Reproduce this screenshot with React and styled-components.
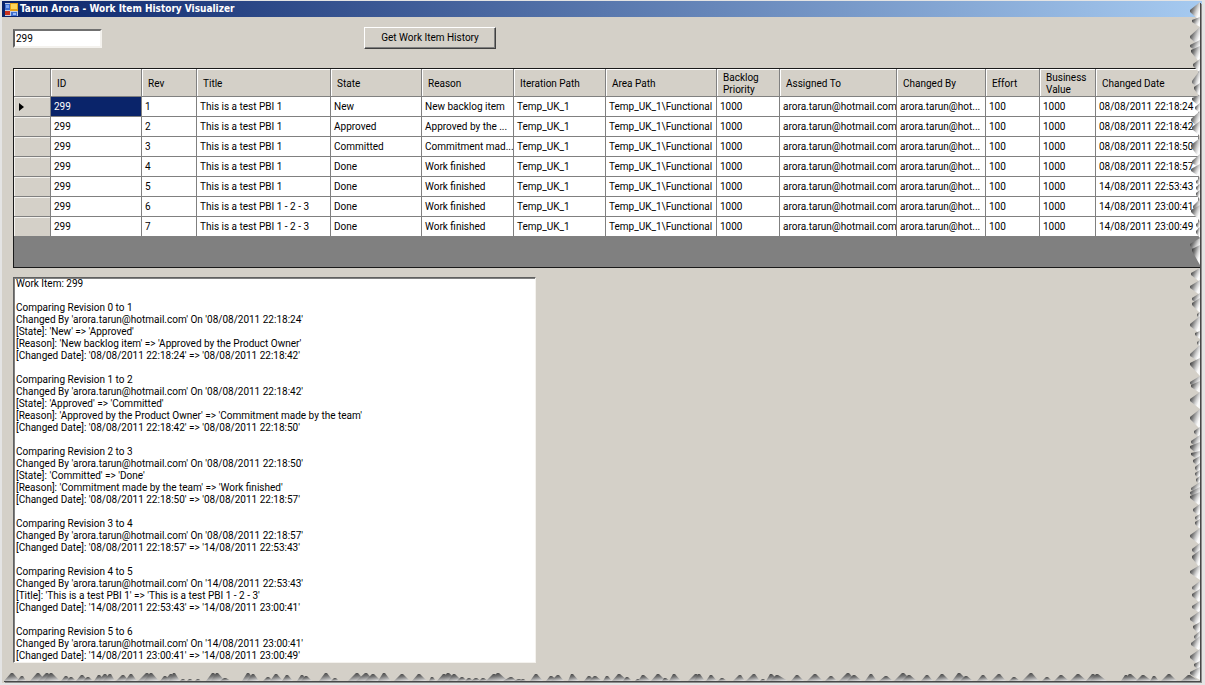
import React, { useState } from 'react';
import styled, { createGlobalStyle } from 'styled-components';

const GlobalStyle = createGlobalStyle`
    * {
        box-sizing: border-box;
    }
    body {
        margin: 0;
        background-color: #e4e4e4;
        font-family: Roboto, "Liberation Sans", sans-serif;
        font-size: 10px;
        line-height: 12px;
        color: #000;
    }
    input, button, textarea {
        font: inherit;
        color: inherit;
    }
`;

const Page = styled.div`
    display: flex;
    min-height: 100vh;
    padding: 1px 3px 2px 2px;
`;

const Window = styled.main`
    position: relative;
    display: flex;
    flex-direction: column;
    flex: 1;
    min-width: 0;
    background-color: #d4d0c8;
    overflow: hidden;
`;

const TitleBar = styled.header`
    display: flex;
    align-items: center;
    gap: 2px;
    height: 16px;
    padding-left: 3px;
    background: linear-gradient(to right, #0a246a, #a6caf0);
`;

const Title = styled.h1`
    margin: 0;
    font-family: "DejaVu Sans Condensed", "DejaVu Sans", sans-serif;
    font-size: 10px;
    line-height: 16px;
    font-weight: bold;
    color: #fff;
`;

const Content = styled.div`
    display: flex;
    flex-direction: column;
    flex: 1;
    padding: 10px 0 20px 11px;
`;

const SearchForm = styled.form`
    display: flex;
    align-items: center;
    gap: 262px;
    margin-bottom: 19px;
`;

const IdInput = styled.input`
    width: 89px;
    height: 19px;
    padding: 0 1px;
    background-color: #fff;
    border: 2px solid;
    border-color: #707070 #f4f2ee #f4f2ee #606060;
    outline: none;
`;

const SearchButton = styled.button`
    width: 132px;
    height: 22px;
    padding: 0;
    background-color: #d4d0c8;
    border: 1px solid;
    border-color: #fff #404040 #404040 #fff;
    box-shadow: inset -1px -1px 0 #808080;
`;

const GridPanel = styled.div`
    min-height: 200px;
    margin-bottom: 9px;
    background-color: #808080;
    border: 1px solid #1a1a1a;
    border-right: 0;
    overflow: hidden;
`;

const Grid = styled.table`
    width: 100%;
    table-layout: fixed;
    border-collapse: separate;
    border-spacing: 0;
    border-right: 3px solid #d4d0c8;
`;

const Col = styled.col`
    width: ${props => props.$width ? `${props.$width}px` : 'auto'};
`;

const HeadCell = styled.th`
    height: 28px;
    padding: 2px 0 0 6px;
    background-color: #d4d0c8;
    border-right: 1px solid #808080;
    border-bottom: 1px solid #808080;
    box-shadow: inset 1px 1px 0 #fff;
    font-weight: normal;
    text-align: left;
    vertical-align: middle;
`;

const RowHead = styled.th`
    height: 20px;
    padding: 0 0 0 4px;
    background-color: #d4d0c8;
    border-right: 1px solid #808080;
    border-bottom: 1px solid #808080;
    box-shadow: inset 1px 1px 0 #f4f2ee;
    text-align: left;
`;

const Cell = styled.td`
    height: 20px;
    padding: 1px 0 0 3px;
    background-color: ${props => props.$selected ? '#0a246a' : '#fff'};
    color: ${props => props.$selected ? '#fff' : '#000'};
    border-right: 1px solid #808080;
    border-bottom: 1px solid #808080;
    white-space: nowrap;
    overflow: hidden;
`;

const Marker = styled.svg`
    display: block;
    width: 6px;
    height: 10px;
`;

const HistoryText = styled.textarea`
    flex: 1;
    width: 523px;
    max-width: 100%;
    min-height: 200px;
    padding: 0 2px;
    background-color: #fff;
    border: 1px solid;
    border-color: #606060 #f4f2ee #f4f2ee #606060;
    box-shadow: inset 1px 1px 0 #808080;
    outline: none;
    resize: none;
    overflow: hidden;
    white-space: pre;
`;

const RightEdge = styled.svg`
    position: absolute;
    top: 0;
    right: 0;
    width: 13px;
    height: 100%;
`;

const BottomEdge = styled.svg`
    position: absolute;
    left: 0;
    bottom: 0;
    width: 100%;
    height: 11px;
`;

const columns = [
    { name: 'ID', width: 91 },
    { name: 'Rev', width: 55 },
    { name: 'Title', width: 134 },
    { name: 'State', width: 91 },
    { name: 'Reason', width: 92 },
    { name: 'Iteration Path', width: 92 },
    { name: 'Area Path', width: 111 },
    { name: 'Backlog Priority', width: 63 },
    { name: 'Assigned To', width: 117 },
    { name: 'Changed By', width: 89 },
    { name: 'Effort', width: 54 },
    { name: 'Business Value', width: 56 },
    { name: 'Changed Date' },
];

const revisions = [
    ['1', 'This is a test PBI 1', 'New', 'New backlog item', '08/08/2011 22:18:24'],
    ['2', 'This is a test PBI 1', 'Approved', 'Approved by the ...', '08/08/2011 22:18:42'],
    ['3', 'This is a test PBI 1', 'Committed', 'Commitment mad...', '08/08/2011 22:18:50'],
    ['4', 'This is a test PBI 1', 'Done', 'Work finished', '08/08/2011 22:18:57'],
    ['5', 'This is a test PBI 1', 'Done', 'Work finished', '14/08/2011 22:53:43'],
    ['6', 'This is a test PBI 1 - 2 - 3', 'Done', 'Work finished', '14/08/2011 23:00:41'],
    ['7', 'This is a test PBI 1 - 2 - 3', 'Done', 'Work finished', '14/08/2011 23:00:49'],
];

const rows = revisions.map(([rev, title, state, reason, date]) => [
    '299', rev, title, state, reason, 'Temp_UK_1', 'Temp_UK_1\\Functional', '1000',
    'arora.tarun@hotmail.com', 'arora.tarun@hot...', '100', '1000', date,
]);

const history = `Work Item: 299

Comparing Revision 0 to 1
Changed By 'arora.tarun@hotmail.com' On '08/08/2011 22:18:24'
[State]: 'New' => 'Approved'
[Reason]: 'New backlog item' => 'Approved by the Product Owner'
[Changed Date]: '08/08/2011 22:18:24' => '08/08/2011 22:18:42'

Comparing Revision 1 to 2
Changed By 'arora.tarun@hotmail.com' On '08/08/2011 22:18:42'
[State]: 'Approved' => 'Committed'
[Reason]: 'Approved by the Product Owner' => 'Commitment made by the team'
[Changed Date]: '08/08/2011 22:18:42' => '08/08/2011 22:18:50'

Comparing Revision 2 to 3
Changed By 'arora.tarun@hotmail.com' On '08/08/2011 22:18:50'
[State]: 'Committed' => 'Done'
[Reason]: 'Commitment made by the team' => 'Work finished'
[Changed Date]: '08/08/2011 22:18:50' => '08/08/2011 22:18:57'

Comparing Revision 3 to 4
Changed By 'arora.tarun@hotmail.com' On '08/08/2011 22:18:57'
[Changed Date]: '08/08/2011 22:18:57' => '14/08/2011 22:53:43'

Comparing Revision 4 to 5
Changed By 'arora.tarun@hotmail.com' On '14/08/2011 22:53:43'
[Title]: 'This is a test PBI 1' => 'This is a test PBI 1 - 2 - 3'
[Changed Date]: '14/08/2011 22:53:43' => '14/08/2011 23:00:41'

Comparing Revision 5 to 6
Changed By 'arora.tarun@hotmail.com' On '14/08/2011 23:00:41'
[Changed Date]: '14/08/2011 23:00:41' => '14/08/2011 23:00:49'`;

// teeth of the torn paper: [start, tip, end, depth]
const rightTeeth = [
    [2, 10, 18, 10], [17, 20, 24, 8], [27, 36, 44, 10], [40, 45, 50, 10], [46, 50, 60, 9],
    [59, 64, 70, 7], [70, 81, 86, 8], [83, 87, 94, 6], [95, 98, 104, 8], [103, 107, 110, 5],
    [111, 119, 126, 9], [121, 127, 133, 8], [138, 145, 156, 9], [154, 161, 165, 8], [164, 169, 174, 9],
    [178, 181, 183, 4], [184, 187, 190, 4], [190, 193, 196, 4], [199, 206, 211, 7], [205, 210, 218, 9],
    [221, 224, 227, 4], [227, 231, 235, 4], [238, 244, 251, 10], [245, 249, 262, 8], [268, 273, 279, 9],
    [280, 286, 292, 10], [293, 298, 302, 8], [298, 303, 310, 8], [312, 314, 316, 3], [316, 324, 331, 10],
    [331, 333, 336, 5], [340, 342, 344, 3], [345, 354, 359, 10], [358, 363, 373, 10], [376, 382, 386, 10],
    [381, 385, 390, 9], [392, 399, 406, 10], [409, 417, 426, 10], [427, 431, 435, 6], [435, 441, 446, 9],
    [442, 446, 454, 10], [451, 453, 458, 9], [456, 460, 465, 7], [463, 467, 471, 5], [470, 473, 476, 5],
    [476, 479, 482, 4], [482, 488, 491, 9], [487, 492, 497, 10], [492, 496, 503, 10], [504, 509, 514, 7],
    [514, 517, 519, 5], [519, 522, 526, 5], [528, 535, 542, 10], [543, 549, 554, 8], [550, 556, 565, 8],
    [565, 571, 577, 10], [581, 587, 590, 8], [589, 594, 600, 8], [601, 606, 610, 8], [611, 618, 624, 10],
    [622, 626, 632, 7], [631, 636, 639, 6], [636, 643, 648, 9], [649, 656, 663, 10], [661, 664, 668, 6],
    [667, 672, 677, 10],
];

const bottomTeeth = [
    [3, 10, 17, 8], [16, 20, 23, 5], [29, 36, 43, 8], [37, 45, 51, 8], [43, 49, 57, 8],
    [60, 64, 68, 5], [66, 69, 73, 4], [75, 80, 85, 6], [82, 86, 90, 4], [93, 97, 102, 6],
    [97, 103, 108, 7], [102, 108, 112, 7], [115, 121, 126, 6], [124, 129, 134, 7], [137, 145, 151, 8],
    [143, 149, 156, 8], [159, 163, 167, 5], [163, 169, 173, 7], [168, 172, 177, 8], [179, 181, 183, 2],
    [186, 188, 190, 2], [194, 196, 198, 2], [205, 211, 218, 8], [210, 215, 222, 8], [219, 223, 228, 3],
    [241, 246, 252, 8], [246, 251, 256, 7], [262, 266, 270, 4], [269, 274, 280, 7], [281, 285, 290, 6],
    [296, 300, 304, 6], [300, 304, 309, 5], [318, 324, 330, 8], [330, 333, 336, 3], [347, 355, 362, 8],
    [355, 364, 371, 8], [364, 371, 378, 7], [377, 382, 388, 8], [393, 400, 407, 7], [411, 417, 424, 7],
    [428, 430, 433, 4], [436, 442, 450, 7], [440, 446, 455, 8], [447, 452, 459, 7], [456, 460, 464, 4],
    [464, 467, 470, 3], [470, 474, 478, 3], [478, 481, 485, 3], [485, 492, 500, 7], [488, 496, 505, 8],
    [502, 509, 514, 4], [513, 517, 520, 2], [519, 521, 523, 2], [529, 534, 540, 7], [545, 549, 555, 5],
    [550, 556, 561, 6], [567, 570, 576, 7], [583, 587, 592, 5], [588, 593, 599, 5], [602, 605, 609, 5],
    [611, 617, 625, 7], [622, 625, 629, 4], [634, 636, 638, 2], [637, 641, 648, 6], [650, 656, 663, 7],
    [661, 663, 667, 3], [668, 672, 678, 7], [687, 694, 700, 7], [693, 697, 702, 7], [705, 709, 714, 6],
    [717, 720, 724, 3], [732, 738, 742, 6], [745, 752, 757, 7], [759, 761, 763, 2], [765, 769, 776, 7],
    [769, 775, 785, 6], [790, 795, 801, 6], [806, 813, 820, 7], [824, 829, 834, 5], [838, 846, 853, 8],
    [846, 852, 859, 6], [864, 869, 874, 7], [878, 884, 890, 5], [893, 901, 909, 8], [901, 907, 914, 6],
    [920, 925, 930, 6], [934, 940, 947, 7], [951, 957, 965, 8], [959, 964, 970, 5], [976, 981, 986, 6],
    [990, 997, 1003, 7], [1008, 1012, 1017, 4], [1021, 1029, 1036, 8], [1041, 1045, 1049, 4], [1053, 1059, 1066, 6],
    [1069, 1076, 1084, 7], [1085, 1091, 1097, 7], [1089, 1095, 1104, 7], [1120, 1124, 1128, 6], [1122, 1128, 1136, 7],
    [1135, 1141, 1149, 6], [1149, 1152, 1156, 5], [1160, 1167, 1174, 7], [1180, 1187, 1196, 6],
];

const AppIcon = () => (
    <svg width="13" height="13" viewBox="0 0 13 13" aria-hidden="true">
        <rect x="0" y="0" width="13" height="13" fill="#c3cde2" />
        <rect x="0" y="1" width="5" height="6" fill="#3f6fd0" />
        <rect x="1" y="2" width="3" height="3" fill="#7fa6ef" />
        <rect x="5" y="0" width="8" height="8" fill="#e8a317" />
        <rect x="6" y="1" width="6" height="5" fill="#ffd65a" />
        <rect x="0" y="8" width="5" height="4" fill="#c8321e" />
        <rect x="6" y="9" width="6" height="4" fill="#3f6fd0" />
        <rect x="8" y="10" width="3" height="2" fill="#9bbcf5" />
    </svg>
);

const TornEdges = () => (
    <>
        <BottomEdge viewBox="0 0 1200 11" preserveAspectRatio="none" aria-hidden="true">
            <defs>
                <linearGradient id="tearUp" x1="0.3" y1="0" x2="0.6" y2="1">
                    <stop offset="0" stopColor="#4a4a4a" />
                    <stop offset="0.4" stopColor="#747474" />
                    <stop offset="1" stopColor="#d8d8d8" />
                </linearGradient>
            </defs>
            {bottomTeeth.map(([start, tip, end, depth]) => (
                <path
                    key={start + '-' + tip}
                    d={`M${start - 1} 9L${tip - 1} ${9 - depth}L${tip + 1} ${9 - depth}L${end + 1} 9Z`}
                    fill="url(#tearUp)"
                />
            ))}
            <rect x="2" y="9" width="1198" height="1" fill="#484848" />
            <rect x="3" y="10" width="1197" height="1" fill="#8c8c8c" />
        </BottomEdge>
        <RightEdge viewBox="0 0 13 682" preserveAspectRatio="none" aria-hidden="true">
            <defs>
                <linearGradient id="tearLeft" x1="0.1" y1="0.2" x2="0.8" y2="0.7">
                    <stop offset="0" stopColor="#4a4a4a" />
                    <stop offset="0.3" stopColor="#7c7c7c" />
                    <stop offset="0.7" stopColor="#d0d0d0" />
                    <stop offset="1" stopColor="#fafafa" />
                </linearGradient>
            </defs>
            {rightTeeth.map(([start, tip, end, depth]) => (
                <path
                    key={start}
                    d={`M11 ${start - 1}L${11 - depth} ${tip - 1}L${11 - depth} ${tip + 1}L11 ${end + 2}Z`}
                    fill="url(#tearLeft)"
                />
            ))}
            <rect x="11" y="2" width="1" height="679" fill="#484848" />
            <rect x="12" y="3" width="1" height="679" fill="#8c8c8c" />
        </RightEdge>
    </>
);

const App = () => {
    const [workItem, setWorkItem] = useState('299');
    const [selected, setSelected] = useState([0, 0]);

    const handleSubmit = e => {
        e.preventDefault();
    }

    return (
        <Page>
            <GlobalStyle />
            <Window>
                <TitleBar>
                    <AppIcon />
                    <Title>Tarun Arora - Work Item History Visualizer</Title>
                </TitleBar>
                <Content>
                    <SearchForm onSubmit={handleSubmit}>
                        <IdInput aria-label="Work item" value={workItem} onChange={e => setWorkItem(e.target.value)} />
                        <SearchButton type="submit">Get Work Item History</SearchButton>
                    </SearchForm>
                    <GridPanel>
                        <Grid>
                            <colgroup>
                                <Col $width={37} />
                                {columns.map(col => <Col key={col.name} $width={col.width} />)}
                            </colgroup>
                            <thead>
                                <tr>
                                    <HeadCell />
                                    {columns.map(col => <HeadCell key={col.name} scope="col">{col.name}</HeadCell>)}
                                </tr>
                            </thead>
                            <tbody>
                                {rows.map((row, r) => (
                                    <tr key={r}>
                                        <RowHead scope="row">
                                            {selected[0] === r &&
                                                <Marker viewBox="0 0 6 10" aria-hidden="true">
                                                    <path d="M1 1L6 5L1 9Z" fill="#000" />
                                                </Marker>
                                            }
                                        </RowHead>
                                        {row.map((value, c) => (
                                            <Cell
                                                key={c}
                                                $selected={selected[0] === r && selected[1] === c}
                                                onClick={() => setSelected([r, c])}
                                            >
                                                {value}
                                            </Cell>
                                        ))}
                                    </tr>
                                ))}
                            </tbody>
                        </Grid>
                    </GridPanel>
                    <HistoryText aria-label="Revision history" readOnly value={history} />
                </Content>
                <TornEdges />
            </Window>
        </Page>
    )
}

export default App;
